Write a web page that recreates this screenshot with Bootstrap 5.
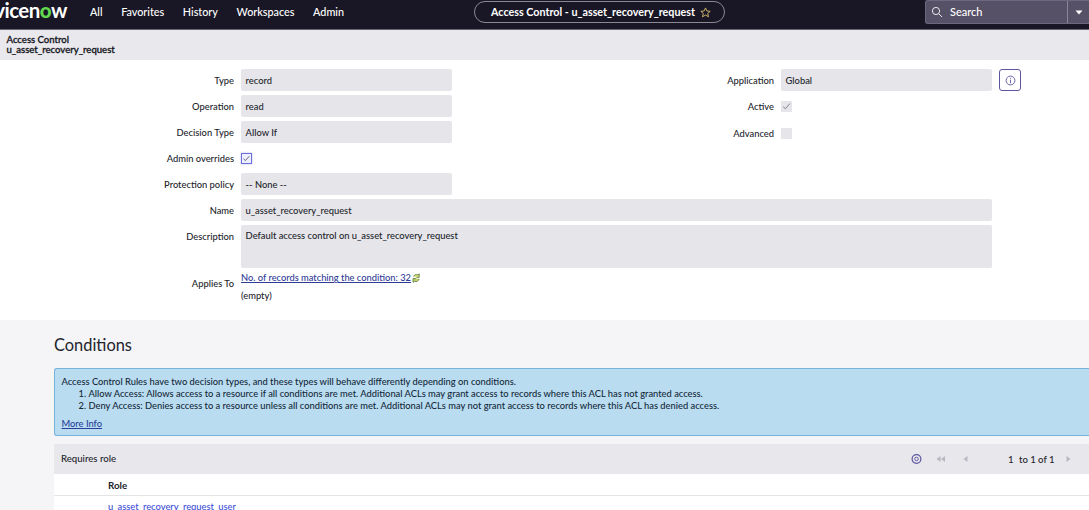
<!DOCTYPE html>
<html lang="en">
<head>
<meta charset="utf-8">
<meta name="viewport" content="width=device-width, initial-scale=1">
<title>Access Control - u_asset_recovery_request</title>
<link href="https://cdn.jsdelivr.net/npm/bootstrap@5.3.0/dist/css/bootstrap.min.css" rel="stylesheet">
<style>
body{font-family:Lato,"Liberation Sans",sans-serif;font-size:9.35px;line-height:12px;color:#22242b;height:510px;overflow:hidden;background:#fff;font-weight:500}
.topbar{height:30px;background:#191725;border-bottom:1px solid #6a6577;color:#fff;font-size:11px}
.brand-word{width:67px;height:22px;font-size:20.5px;line-height:20px;font-weight:700;letter-spacing:-.55px;justify-content:flex-end}
.brand-word b{color:#62d84e;font-weight:900}
.main-links{font-size:10.8px;margin-left:23px;width:254px;height:24px}
.main-links a{color:#fff;text-decoration:none}
.title-pill{width:251px;height:22px;border:1px solid #8b8895;border-radius:11px;font-size:10.75px;font-weight:700;margin:1px 0 0 130px;gap:5px;padding-left:16px}
.search-box{width:164px;height:24px;background:#565167;border:1px solid #6d6880;border-right:0;border-radius:3px 0 0 3px;font-size:11px}
.search-label{gap:7px;padding-left:5px}
.search-drop{width:22px;border-left:1px solid #8a8599}
.subbar{height:30px;background:#e8e8ed;padding:5px 6px 0 6.500px;line-height:10px;font-size:9.55px;color:#15161c;-webkit-text-stroke:.3px #15161c}
.form-area{height:260px;padding-top:9px}
.col-l{width:452px}
.col-r{margin-left:92px;width:485px}
.f-row{height:22px;margin-bottom:4px;gap:7px}
.f-label{width:234px;text-align:right;flex:none;line-height:14px;padding-top:1px}
.col-r .f-label{width:230px}
.f-field{height:22px;width:211px;background:#e5e5ea;border-radius:2px;padding:0 4.6px;line-height:23px;flex:none}
.f-wide{width:751px}
.f-area{height:43px;line-height:21px}
.tick{width:11px;height:11px;background:#e5e5ea;flex:none}
.tick-on{background:#eef0ff;border:1px solid #6c6fd6;box-shadow:0 0 2px #b9baf4}
.info-btn{width:22px;height:22px;border:1px solid #5b55a0;border-radius:3px;color:#5b55a0;background:#fff}
.cnt-link{color:#2e3c96;text-decoration:underline;font-size:9.3px}
.applies{margin-top:4px;gap:7px}
.empty-note{padding-top:6px}
.active-row{padding-top:1px;margin-bottom:5px}
.adv-row{padding-top:1px}
.desc-label{padding-top:5px}
.cond-area{background:#f5f5f7;height:190px;padding:14px 0 0 54px}
.cond-title{font-size:16.4px;line-height:21px;margin:0 0 13px;font-weight:400;color:#22242b}
.note-box{height:68px;background:#b9dcf0;border:1px solid #74b3da;border-right:0;border-radius:3px 0 0 3px;padding:7px 7px 0 6.500px;color:#14293a;margin-bottom:8px;font-size:9.33px}
.note-box ol{padding-left:27px;margin:0}
.note-box a{color:#273f9a;display:inline-block;margin-top:6px}
.list-head{height:30px;background:#e8e8ec;padding-left:7px;font-size:9.6px}
.role-table{background:#fff}
.role-head{height:22px;border-bottom:1px solid #e3e4e8;padding:6px 0 0 54px;font-weight:700;font-size:9.8px;line-height:11px}
.role-row{height:20px;padding:5px 0 0 54px;color:#3d4ed6}
</style>
<script src="https://cdn.jsdelivr.net/npm/bootstrap@5.3.0/dist/js/bootstrap.bundle.min.js"></script>
</head>
<body>
<header class="topbar d-flex">
  <div class="brand-word d-flex flex-shrink-0"><span>vicen</span><b>o</b><span>w</span></div>
  <nav class="main-links d-flex align-items-center justify-content-between">
    <a href="#">All</a><a href="#">Favorites</a><a href="#">History</a><a href="#">Workspaces</a><a href="#">Admin</a>
  </nav>
  <div class="title-pill d-flex align-items-center"><span>Access Control - u_asset_recovery_request</span>
    <svg width="11" height="11" viewBox="0 0 11 11" fill="none" stroke="#d9bf72" stroke-width=".9"><path d="M5.500.9 6.900 4l3.300.3-2.500 2.200.8 3.300-3-1.800-3 1.800.8-3.300L.8 4.300 4.100 4z"/></svg>
  </div>
  <div class="search-box d-flex ms-auto">
    <div class="search-label d-flex align-items-center flex-grow-1"><svg width="12" height="12" viewBox="0 0 12 12" fill="none" stroke="#e9e8ee"><circle cx="5" cy="5" r="3.600"/><path d="m7.700 7.700 3.300 3.300"/></svg><span>Search</span></div>
    <div class="search-drop d-flex align-items-center justify-content-center"><svg width="8" height="5" viewBox="0 0 8 5"><path d="M.5.5h7L4 4.500z" fill="#fff"/></svg></div>
  </div>
</header>
<div class="subbar">Access Control<br>u_asset_recovery_request</div>
<main>
<section class="form-area">
  <div class="d-flex">
    <div class="col-l">
      <div class="f-row d-flex align-items-center"><div class="f-label">Type</div><div class="f-field">record</div></div>
      <div class="f-row d-flex align-items-center"><div class="f-label">Operation</div><div class="f-field">read</div></div>
      <div class="f-row d-flex align-items-center"><div class="f-label">Decision Type</div><div class="f-field">Allow If</div></div>
      <div class="f-row d-flex align-items-center"><div class="f-label">Admin overrides</div><div class="tick tick-on d-flex"><svg width="9" height="9" viewBox="0 0 9 9" fill="none" stroke="#55586e" stroke-width=".9"><path d="m1.500 4.800 1.900 1.800L7.300 2.200"/></svg></div></div>
      <div class="f-row d-flex align-items-center"><div class="f-label">Protection policy</div><div class="f-field">-- None --</div></div>
    </div>
    <div class="col-r">
      <div class="f-row d-flex align-items-center"><div class="f-label">Application</div><div class="f-field">Global</div><div class="info-btn d-flex align-items-center justify-content-center"><svg width="11" height="11" viewBox="0 0 11 11" fill="none" stroke="currentColor" stroke-width=".9"><circle cx="5.500" cy="5.500" r="4.400"/><path d="M5.500 4.700v3.500M5.500 2.800v1"/></svg></div></div>
      <div class="f-row active-row d-flex align-items-center"><div class="f-label">Active</div><div class="tick d-flex"><svg width="11" height="11" viewBox="0 0 11 11" fill="none" stroke="#777984" stroke-width=".9"><path d="m2.200 5.700 2.100 2L8.900 2.600"/></svg></div></div>
      <div class="f-row adv-row d-flex align-items-center"><div class="f-label">Advanced</div><div class="tick"></div></div>
    </div>
  </div>
  <div class="f-row d-flex align-items-center"><div class="f-label">Name</div><div class="f-field f-wide">u_asset_recovery_request</div></div>
  <div class="d-flex" style="gap:7px"><div class="f-label desc-label">Description</div><div class="f-field f-wide f-area">Default access control on u_asset_recovery_request</div></div>
  <div class="applies d-flex"><div class="f-label desc-label">Applies To</div>
    <div><div class="d-flex align-items-center"><a href="#" class="cnt-link">No. of records matching the condition: 32</a><svg width="10" height="10" viewBox="0 0 10 10"><path d="M2.600 3.600C3 1.800 5 1 6.800 1.800L8.200.9v3.400H5.500" fill="#d9de74" stroke="#5f8047" stroke-width=".9"/><path d="M8.100 5.800C7.800 8 5.500 9.200 3.600 8.300L2 9.300V5.600h3.200" fill="#c8d56a" stroke="#5f8047" stroke-width=".9"/></svg></div><div class="empty-note">(empty)</div></div>
  </div>
</section>
<section class="cond-area">
  <h2 class="cond-title">Conditions</h2>
  <div class="note-box">Access Control Rules have two decision types, and these types will behave differently depending on conditions.
    <ol><li>Allow Access: Allows access to a resource if all conditions are met. Additional ACLs may grant access to records where this ACL has not granted access.</li><li>Deny Access: Denies access to a resource unless all conditions are met. Additional ACLs may not grant access to records where this ACL has denied access.</li></ol>
    <a href="#">More Info</a></div>
  <div class="list-head d-flex align-items-center"><span>Requires role</span>
    <svg class="ms-auto" width="178" height="30" viewBox="0 0 178 30"><g fill="none" stroke="#5b55a0" stroke-width=".9"><circle cx="5.500" cy="15" r="4.400" stroke-width="1.200"/><circle cx="5.500" cy="15" r="1.800"/></g><g fill="#b7b8c2"><path d="M29.500 12v6l-4-3zM34 12v6l-4-3zM56.500 12v6l-4-3zM155.500 12v6l4-3z"/></g><g fill="#22242b" font-size="9.600"><text x="97" y="19">1</text><text x="108" y="19" textLength="35.500">to 1 of 1</text></g></svg>
  </div>
  <div class="role-table"><div class="role-head">Role</div><div class="role-row">u_asset_recovery_request_user</div></div>
</section>
</main>
</body>
</html>
